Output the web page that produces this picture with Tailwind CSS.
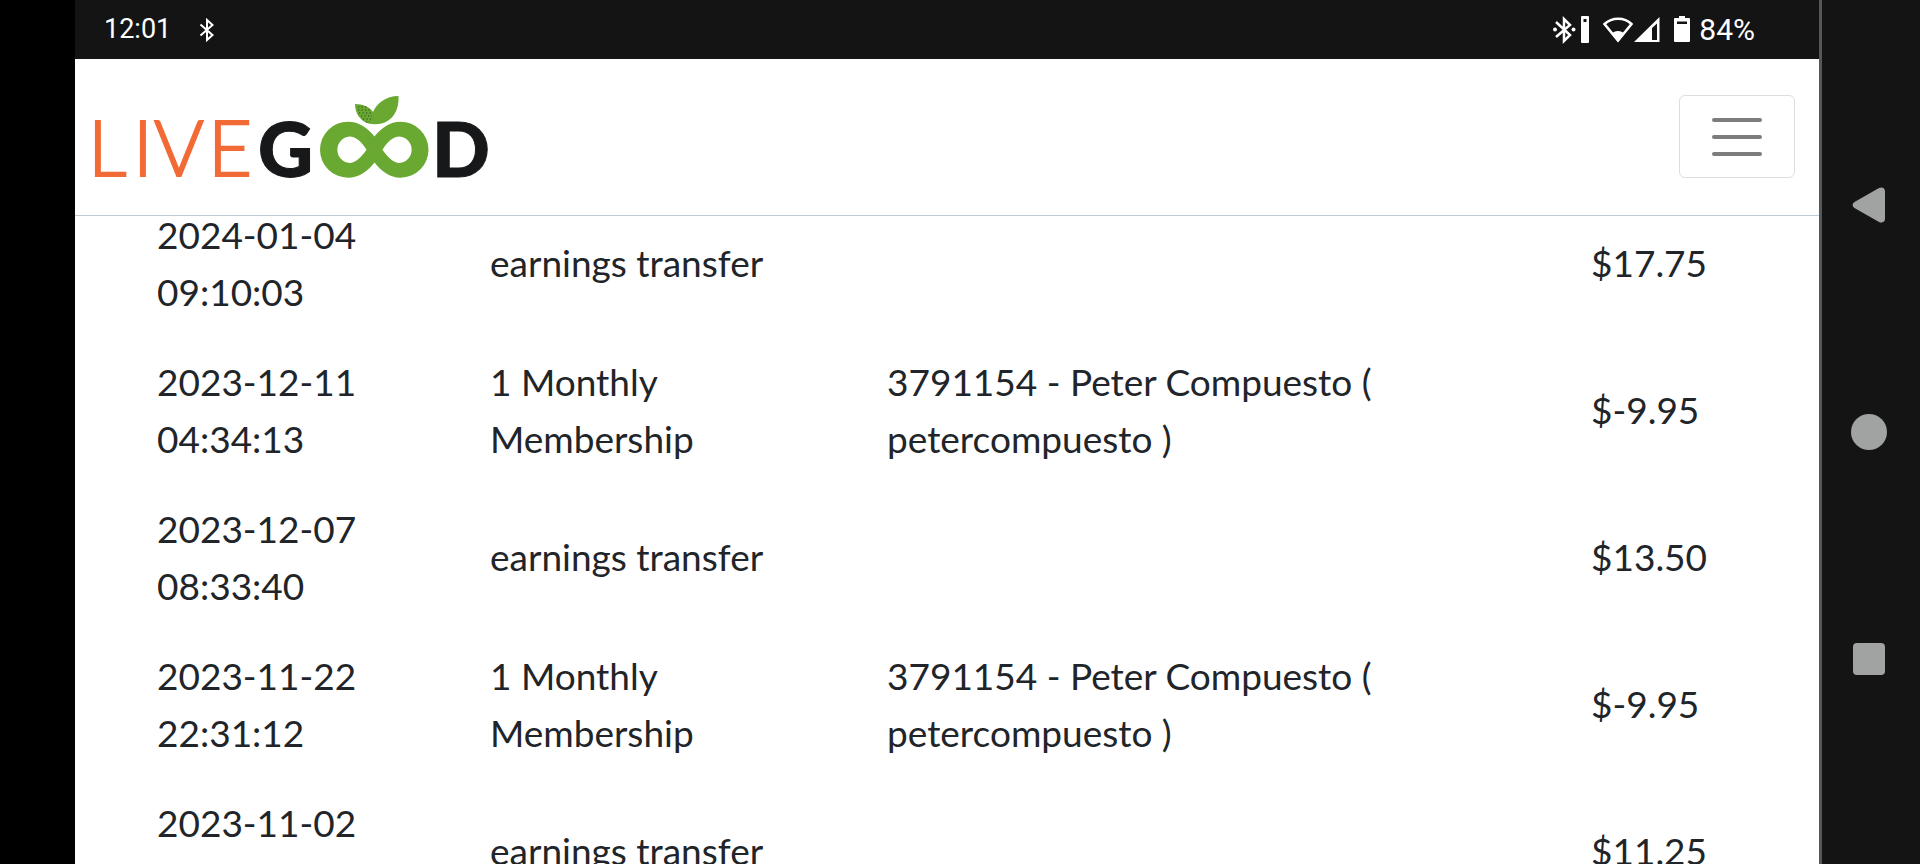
<!DOCTYPE html>
<html lang="en">
<head>
<meta charset="utf-8">
<title>LiveGood</title>
<script src="https://cdn.jsdelivr.net/npm/@tailwindcss/browser@4"></script>
</head>
<body class="flex h-screen overflow-hidden bg-black font-['Lato',sans-serif]">
<div class="ml-[75px] flex min-w-0 flex-1 flex-col bg-white">
  <div class="flex h-[59px] shrink-0 items-center justify-between bg-[#141414] pr-16 pl-[29px] font-['Roboto',sans-serif] text-[27px] leading-none text-white">
    <div class="flex items-center gap-7">
      <span>12:01</span>
      <svg class="h-6 w-4" viewBox="0 0 16 24" fill="none" stroke="#fff" stroke-width="2" aria-hidden="true"><path d="M1.500 6.500 13.500 17 8 22V2l5.500 5L1.500 17.500"/></svg>
    </div>
    <div class="flex items-center">
      <svg class="h-7 w-[138px]" viewBox="0 0 138 28" aria-hidden="true">
        <path d="M3 6 17 19l-6 6V3l6 6L3 21" fill="none" stroke="#fff" stroke-width="2.500"/>
        <circle cx="2" cy="13.500" r="2" fill="#fff"/><circle cx="20.500" cy="13.500" r="2" fill="#fff"/>
        <path fill="#fff" fill-rule="evenodd" d="M29 0h6a1 1 0 0 1 1 1v25a1 1 0 0 1-1 1h-6a1 1 0 0 1-1-1V1a1 1 0 0 1 1-1Zm1.500 3v3h3V3Z"/>
        <path d="M51.500 8C59 1 71.500 1 78.500 8L65 24.500Z" fill="none" stroke="#fff" stroke-width="2.500"/>
        <path d="M65 26 58.500 18c3-4 10-4 13 0Z" fill="#fff"/>
        <path fill="#fff" fill-rule="evenodd" d="M81 26 106.500 1v25ZM99 12v12h5V7.500Z"/>
        <path fill="#fff" fill-rule="evenodd" d="M126 0h6v2h4a1 1 0 0 1 1 1v22a1 1 0 0 1-1 1h-14a1 1 0 0 1-1-1V3a1 1 0 0 1 1-1h4Zm-2 5.500V8h10V5.500Z"/>
      </svg>
      <span class="ml-2 text-[30px]">84%</span>
    </div>
  </div>
  <header class="flex h-[157px] shrink-0 items-center justify-between border-b border-[#bccad6] bg-white pr-6 pl-5">
    <a href="#" aria-label="LiveGood">
      <svg class="h-[84px] w-[400px] overflow-visible" viewBox="0 0 400 84" font-family="Lato, sans-serif" font-size="76">
        <text y="81" x="-7 38 59 113" font-weight="300" fill="#f26a36" stroke="#f26a36" stroke-width="2">LIVE</text>
        <text y="82" x="163" font-weight="900" fill="#17181a" stroke="#17181a">G</text>
        <path fill="#69a932" fill-rule="evenodd" d="M279.500 41.500C273 33 264 26.700 253 26.700a28 28 0 0 0 0 56C264 82.700 273 76 279.500 67.500 286 76 295 82.700 305.500 82.700a28 28 0 0 0 0-56C295 26.700 286 33 279.500 41.500ZM271.500 54.700C267 61 261 68 254.500 68a13.300 13.300 0 0 1 0-26.500C261 41.500 267 47 271.500 54.700ZM287.500 54.700C292 61 298 68 304.500 68a13.300 13.300 0 0 0 0-26.500C298 41.500 292 47 287.500 54.700Z"/>
        <path fill="#69a932" d="M260 9c8 0 15 3 18 8C282 8 291 1 303.500 1c1 14-6 25-17 27.500-4 1-9 1-13 0C265 26 260 18 260 9Z"/>
        <path d="M263 12h9M263 15h12M264 18h13M266 21h11M268 24h8M271 27h4" stroke="#25451a" stroke-width="1.200" stroke-dasharray="1.200 2.300"/>
        <text y="82" x="337" font-weight="900" fill="#17181a" stroke="#17181a">D</text>
      </svg>
    </a>
    <button type="button" aria-label="Toggle navigation" class="mb-px flex h-[83px] w-[116px] flex-col items-center justify-center gap-[13px] rounded-md border border-[#dedede]">
      <span class="h-1 w-[50px] rounded-full bg-[#7d7d7d]"></span>
      <span class="h-1 w-[50px] rounded-full bg-[#7d7d7d]"></span>
      <span class="h-1 w-[50px] rounded-full bg-[#7d7d7d]"></span>
    </button>
  </header>
  <main class="min-h-0 flex-1 overflow-hidden">
    <table class="-mt-[27px] w-full table-fixed text-left text-[37px] leading-[57px] text-[#212529]">
      <colgroup><col class="w-[415px]"><col class="w-[397px]"><col class="w-[704px]"><col></colgroup>
      <tbody>
        <tr class="h-[147px]"><td class="pl-[82px]">2024-01-04<br>09:10:03</td><td>earnings transfer</td><td></td><td>$17.75</td></tr>
        <tr class="h-[147px]"><td class="pl-[82px]">2023-12-11<br>04:34:13</td><td>1 Monthly<br>Membership</td><td>3791154 - Peter Compuesto (<br>petercompuesto )</td><td>$-9.95</td></tr>
        <tr class="h-[147px]"><td class="pl-[82px]">2023-12-07<br>08:33:40</td><td>earnings transfer</td><td></td><td>$13.50</td></tr>
        <tr class="h-[147px]"><td class="pl-[82px]">2023-11-22<br>22:31:12</td><td>1 Monthly<br>Membership</td><td>3791154 - Peter Compuesto (<br>petercompuesto )</td><td>$-9.95</td></tr>
        <tr class="h-[147px]"><td class="pl-[82px]">2023-11-02<br>&nbsp;</td><td>earnings transfer</td><td></td><td>$11.25</td></tr>
      </tbody>
    </table>
  </main>
</div>
<nav aria-label="System" class="flex w-[101px] shrink-0 flex-col items-center justify-center gap-[191px] border-l-[3px] border-[#555759] bg-[#141414] pr-1">
  <button type="button" aria-label="Back"><svg class="size-9" viewBox="0 0 36 36" fill="#a1a3a2"><path d="M3.500 15 28 1c3-1.500 6 0 6 3.500v27c0 3.500-3 5-6 3.500L3.500 21c-2.500-1.500-2.500-4.500 0-6Z"/></svg></button>
  <button type="button" aria-label="Home" class="size-9 rounded-full bg-[#a1a3a2]"></button>
  <button type="button" aria-label="Recent apps" class="flex size-9 items-center justify-center"><span class="size-8 rounded bg-[#a1a3a2]"></span></button>
</nav>
</body>
</html>
